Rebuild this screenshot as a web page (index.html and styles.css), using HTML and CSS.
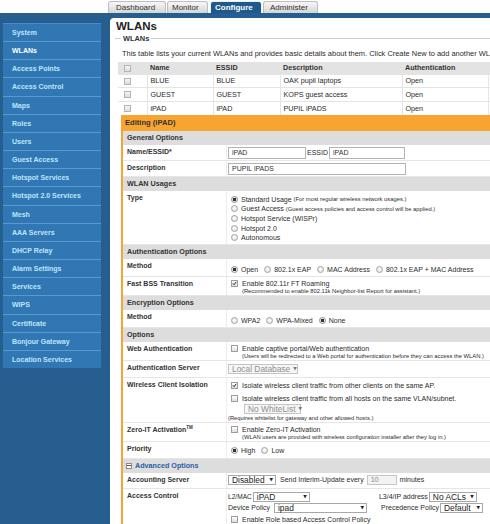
FILE: index.html
```html
<!DOCTYPE html>
<html>
<head>
<meta charset="utf-8">
<title>WLANs</title>
<link rel="stylesheet" href="styles.css">
</head>
<body>
<div class="page">
  <header class="topbar">
    <nav class="tabs">
      <span class="tab t-dash">Dashboard</span>
      <span class="tab t-mon">Monitor</span>
      <span class="tab t-conf active">Configure</span>
      <span class="tab t-adm">Administer</span>
    </nav>
  </header>
  <div class="shell">
    <aside class="sidebar">
      <ul class="menu">
        <li>System</li>
        <li class="current">WLANs</li>
        <li>Access Points</li>
        <li>Access Control</li>
        <li>Maps</li>
        <li>Roles</li>
        <li>Users</li>
        <li>Guest Access</li>
        <li>Hotspot Services</li>
        <li>Hotspot 2.0 Services</li>
        <li>Mesh</li>
        <li>AAA Servers</li>
        <li>DHCP Relay</li>
        <li>Alarm Settings</li>
        <li>Services</li>
        <li>WIPS</li>
        <li>Certificate</li>
        <li>Bonjour Gateway</li>
        <li>Location Services</li>
      </ul>
    </aside>
    <main class="content">
      <h1 class="title">WLANs</h1>
      <fieldset class="box">
        <legend>WLANs</legend>
        <p class="intro">This table lists your current WLANs and provides basic details about them. Click Create New to add another WLAN to the table.</p>
        <table class="list">
          <colgroup>
            <col class="c-chk"><col class="c-name"><col class="c-essid"><col class="c-desc"><col class="c-auth"><col class="c-enc">
          </colgroup>
          <thead>
            <tr><th><span class="tcb"></span></th><th>Name</th><th>ESSID</th><th>Description</th><th>Authentication</th><th>Encryption</th></tr>
          </thead>
          <tbody>
            <tr><td><span class="tcb"></span></td><td>BLUE</td><td>BLUE</td><td>OAK pupil laptops</td><td>Open</td><td>None</td></tr>
            <tr><td><span class="tcb"></span></td><td>GUEST</td><td>GUEST</td><td>KOPS guest access</td><td>Open</td><td>None</td></tr>
            <tr><td><span class="tcb"></span></td><td>iPAD</td><td>iPAD</td><td>PUPIL iPADS</td><td>Open</td><td>None</td></tr>
          </tbody>
        </table>

        <div class="editor">
          <div class="ed-title">Editing (iPAD)</div>

          <div class="sec">General Options</div>
          <div class="row">
            <div class="lbl">Name/ESSID*</div>
            <div class="val v-input"><div class="ln-box"><input class="txt w-name" value="iPAD"><span class="essid">ESSID</span><input class="txt w-essid" value="iPAD"></div></div>
          </div>
          <div class="row">
            <div class="lbl">Description</div>
            <div class="val v-input"><div class="ln-box"><input class="txt w-desc" value="PUPIL iPADS"></div></div>
          </div>

          <div class="sec">WLAN Usages</div>
          <div class="row">
            <div class="lbl">Type</div>
            <div class="val v-type">
              <div class="ln tl"><span class="rd on"></span>Standard Usage<span class="hint">(For most regular wireless network usages.)</span></div>
              <div class="ln tl"><span class="rd"></span>Guest Access<span class="hint">(Guest access policies and access control will be applied.)</span></div>
              <div class="ln tl"><span class="rd"></span>Hotspot Service (WISPr)</div>
              <div class="ln tl"><span class="rd"></span>Hotspot 2.0</div>
              <div class="ln tl"><span class="rd"></span>Autonomous</div>
            </div>
          </div>

          <div class="sec">Authentication Options</div>
          <div class="row">
            <div class="lbl">Method</div>
            <div class="val v-radio"><div class="ln">
              <span class="opt"><span class="rd on"></span>Open</span>
              <span class="opt"><span class="rd"></span>802.1x EAP</span>
              <span class="opt"><span class="rd"></span>MAC Address</span>
              <span class="opt"><span class="rd"></span>802.1x EAP + MAC Address</span>
            </div></div>
          </div>
          <div class="row">
            <div class="lbl">Fast BSS Transition</div>
            <div class="val v-check">
              <div class="ln"><span class="cb on"><svg viewBox="0 0 7 7"><path d="M1.2 3.4 L2.9 5.2 L5.9 1.2" fill="none" stroke="#222" stroke-width="1.4"/></svg></span>Enable 802.11r FT Roaming</div>
              <div class="note ind">(Recommended to enable 802.11k Neighbor-list Report for assistant.)</div>
            </div>
          </div>

          <div class="sec">Encryption Options</div>
          <div class="row">
            <div class="lbl">Method</div>
            <div class="val v-radio"><div class="ln">
              <span class="opt"><span class="rd"></span>WPA2</span>
              <span class="opt"><span class="rd"></span>WPA-Mixed</span>
              <span class="opt"><span class="rd on"></span>None</span>
            </div></div>
          </div>

          <div class="sec">Options</div>
          <div class="row">
            <div class="lbl">Web Authentication</div>
            <div class="val v-check">
              <div class="ln"><span class="cb"></span>Enable captive portal/Web authentication</div>
              <div class="note ind">(Users will be redirected to a Web portal for authentication before they can access the WLAN.)</div>
            </div>
          </div>
          <div class="row">
            <div class="lbl">Authentication Server</div>
            <div class="val v-sel"><div class="ln-box"><span class="sel dis w-ldb">Local Database<span class="arr">&#9660;</span></span></div></div>
          </div>
          <div class="row">
            <div class="lbl">Wireless Client Isolation</div>
            <div class="val v-iso">
              <div class="ln"><span class="cb on"><svg viewBox="0 0 7 7"><path d="M1.2 3.4 L2.9 5.2 L5.9 1.2" fill="none" stroke="#222" stroke-width="1.4"/></svg></span>Isolate wireless client traffic from other clients on the same AP.</div>
              <div class="ln gap4"><span class="cb"></span>Isolate wireless client traffic from all hosts on the same VLAN/subnet.</div>
              <div class="ln-box gap1"><span class="sel dis w-wl">No WhiteList<span class="arr">&#9660;</span></span></div>
              <div class="note gap1">(Requires whitelist for gateway and other allowed hosts.)</div>
            </div>
          </div>
          <div class="row">
            <div class="lbl">Zero-IT Activation<sup class="tm">TM</sup></div>
            <div class="val v-check">
              <div class="ln"><span class="cb"></span>Enable Zero-IT Activation</div>
              <div class="note ind">(WLAN users are provided with wireless configuration installer after they log in.)</div>
            </div>
          </div>
          <div class="row">
            <div class="lbl">Priority</div>
            <div class="val v-prio"><div class="ln">
              <span class="opt"><span class="rd on"></span>High</span>
              <span class="opt"><span class="rd"></span>Low</span>
            </div></div>
          </div>

          <div class="sec adv"><span class="minus"></span>Advanced Options</div>
          <div class="row">
            <div class="lbl">Accounting Server</div>
            <div class="val v-acct"><div class="ln-box">
              <span class="sel w-dis">Disabled<span class="arr">&#9660;</span></span>
              <span class="send">Send Interim-Update every</span>
              <input class="txt small dis w-ten" value="10">
              <span class="mins">minutes</span>
            </div></div>
          </div>
          <div class="row">
            <div class="lbl">Access Control</div>
            <div class="val v-acl">
              <div class="ln-box"><span class="mini">L2/MAC</span><span class="sel w-l2">iPAD<span class="arr">&#9660;</span></span><span class="acl-l3">L3/4/IP address</span><span class="sel w-acl">No ACLs<span class="arr">&#9660;</span></span></div>
              <div class="ln-box gap1"><span class="devp">Device Policy</span><span class="sel w-dev">ipad<span class="arr">&#9660;</span></span><span class="acl-prec">Precedence Policy</span><span class="sel w-def">Default<span class="arr">&#9660;</span></span></div>
              <div class="ln gap3"><span class="cb"></span>Enable Role based Access Control Policy</div>
            </div>
          </div>
        </div>
      </fieldset>
    </main>
  </div>
</div>
</body>
</html>
```

FILE: styles.css
```css
* { box-sizing: border-box; }
html, body { margin: 0; padding: 0; }
body {
  width: 490px;
  height: 524px;
  overflow: hidden;
  background: #fff;
  font-family: "Liberation Sans", Arial, sans-serif;
  font-size: 7px;
  color: #2b2b2b;
}
.page { width: 640px; }

/* ---------- top tabs ---------- */
.topbar {
  height: 13px;
  display: flex;
  align-items: flex-end;
  padding-left: 108px;
  background: #fff;
}
.tabs { display: flex; align-items: flex-end; }
.tab {
  height: 12px;
  line-height: 11px;
  font-size: 8px;
  color: #333;
  background: linear-gradient(#f7f7f7, #d5d5d5);
  border: 1px solid #bdbdbd;
  border-bottom: 0;
  border-radius: 3px 3px 0 0;
  white-space: nowrap;
}
.t-dash { width: 58px; padding-left: 7px; }
.t-mon { width: 41px; padding-left: 4px; margin-left: 1px; }
.t-conf { width: 52px; padding-left: 4px; margin-left: 2px; }
.t-adm { width: 55px; padding-left: 6px; margin-left: 1px; }
.tab.active {
  background: #1f5a8d;
  color: #fff;
  font-weight: bold;
  border-color: #e8eef5;
}

/* ---------- shell ---------- */
.shell {
  display: flex;
  height: 511px;
  background: #265f8f;
}
.sidebar {
  width: 110px;
  flex: none;
  padding: 10px 0 0 3px;
}
.menu {
  list-style: none;
  margin: 0;
  padding: 0;
  width: 98px;
  background: #3177b4;
}
.menu li {
  height: 18.17px;
  line-height: 17px;
  border-top: 1px solid #5a99cf;
  padding-left: 9px;
  font-size: 7px;
  font-weight: bold;
  color: #bfe6fd;
  white-space: nowrap;
}
.menu li:first-child { border-top-color: #4c8cc4; }
.menu li.current { color: #fff; }

.content {
  flex: 1;
  margin-top: 5px;
  background: #fff;
  border-top-left-radius: 4px;
  padding-left: 5px;
}
.title {
  margin: 0 0 0 1px;
  padding-top: 1px;
  font-size: 11.5px;
  line-height: 14px;
  font-weight: bold;
  color: #222;
}

.box {
  margin: 1px 0 0 0;
  padding: 0;
  border: 0;
  border-top: 1px solid #cfcfcf;
  min-width: 0;
}
.box legend {
  margin-left: 6px;
  padding: 0 2px;
  font-size: 7.4px;
  line-height: 9px;
  font-weight: bold;
  color: #333;
}
.intro {
  margin: 5.5px 0 0 7px;
  font-size: 7.45px;
  line-height: 9px;
  white-space: nowrap;
}

/* ---------- WLAN list ---------- */
.list {
  margin: 4px 0 0 3px;
  border-collapse: collapse;
  table-layout: fixed;
  width: 448px;
  font-size: 7.2px;
}
.c-chk { width: 29px; }
.c-name { width: 66px; }
.c-essid { width: 67px; }
.c-desc { width: 122px; }
.c-auth { width: 86px; }
.c-enc { width: 78px; }
.list th {
  height: 12.5px;
  padding: 0 0 0 3px;
  background: #e3e3e3;
  text-align: left;
  font-weight: bold;
  color: #333;
}
.list td {
  height: 13.5px;
  padding: 0 0 0 3px;
  border-top: 1px solid #e4e4e4;
  border-left: 1px solid #e4e4e4;
  white-space: nowrap;
}
.list td:first-child, .list th:first-child { border-left: 0; padding-left: 6px; }
.tcb {
  display: inline-block;
  width: 7px;
  height: 7px;
  vertical-align: middle;
  border: 1px solid #b4b4b4;
  background: linear-gradient(#f6f6f6, #dcdcdc);
}

/* ---------- editor ---------- */
.editor {
  margin-left: 6px;
  border-left: 2px solid #f6a535;
  width: 515px;
}
.ed-title {
  height: 16px;
  line-height: 16px;
  padding-left: 2px;
  background: #f7a530;
  font-size: 7.6px;
  font-weight: bold;
  color: #333;
}
.sec {
  height: 14px;
  line-height: 14px;
  padding-left: 4px;
  background: #dddddd;
  font-size: 7.2px;
  font-weight: bold;
  color: #333;
  display: flex;
  align-items: center;
}
.sec.adv { color: #2a5fa6; padding-left: 3px; }
.minus {
  width: 6px;
  height: 6px;
  margin-right: 3px;
  border: 1px solid #8a8a8a;
  background: linear-gradient(#555, #555) center / 4px 1px no-repeat, #fff;
}
.row {
  display: grid;
  grid-template-columns: 103px 1fr;
  border-bottom: 1px solid #e6e6e6;
}
.lbl {
  padding: 2.5px 0 0 4px;
  line-height: 9px;
  font-size: 7px;
  font-weight: bold;
  color: #333;
  white-space: nowrap;
}
.tm { font-size: 4.5px; vertical-align: 3px; line-height: 0; }
.val {
  padding-left: 1px;
  border-left: 1px solid #ededed;
  display: flex;
  flex-direction: column;
  align-items: flex-start;
  min-width: 0;
}
.ln {
  display: flex;
  align-items: center;
  height: 9px;
  white-space: nowrap;
  font-size: 7px;
}
.ln-box {
  display: flex;
  align-items: center;
  white-space: nowrap;
  font-size: 7px;
}
.tl { height: 9.6px; }
.hint { font-size: 5.8px; margin-left: 2px; }
.note {
  height: 6px;
  line-height: 6px;
  font-size: 5.8px;
  white-space: nowrap;
}
.ind { margin-left: 14px; }
.gap1 { margin-top: 1px; }
.gap3 { margin-top: 2.5px; }
.gap4 { margin-top: 4px; }

.v-input { padding-top: 2px; padding-bottom: 1px; }
.v-type { padding-top: 4px; padding-bottom: 1.5px; }
.v-radio { padding-top: 6px; padding-bottom: 2px; }
.v-check { padding-top: 2px; padding-bottom: 1px; }
.v-sel { padding-top: 3px; padding-bottom: 3px; }
.v-iso { padding-top: 3px; padding-bottom: 1px; }
.v-prio { padding-top: 4.5px; padding-bottom: 2.5px; }
.v-acct { padding-top: 2px; padding-bottom: 3px; }
.v-acl { padding-top: 3px; padding-bottom: 4px; }

/* controls */
.rd {
  flex: none;
  width: 7px;
  height: 7px;
  margin: 0 3px 0 3px;
  border: 1px solid #a3a3a3;
  border-radius: 50%;
  background: radial-gradient(circle at 50% 40%, #ffffff, #dadada);
}
.rd.on {
  background: radial-gradient(circle, #333 0 1.5px, #e8e8e8 2px, #fff);
  border-color: #8f8f8f;
}
.opt { display: flex; align-items: center; margin-right: 3px; }
.cb {
  flex: none;
  display: flex;
  width: 7px;
  height: 7px;
  margin: 0 4px 0 3px;
  border: 1px solid #9d9d9d;
  background: linear-gradient(#ffffff, #dedede);
}
.cb svg { width: 100%; height: 100%; display: block; }

.txt {
  height: 12px;
  margin: 0;
  padding: 0 3px;
  border: 1px solid #b3b3b3;
  background: #fff;
  font-family: "Liberation Sans", Arial, sans-serif;
  font-size: 7px;
  color: #333;
  outline: none;
}
.txt.small { height: 10px; }
.txt.dis { background: #f3f3f3; color: #888; border-color: #c6c6c6; }
.w-name { width: 78px; }
.w-essid { width: 76px; }
.w-desc { width: 178px; }
.w-ten { width: 30px; margin-left: 3px; }
.essid { margin: 0 1px 0 1px; }

.sel {
  flex: none;
  display: inline-flex;
  align-items: center;
  justify-content: space-between;
  height: 10px;
  padding: 0 2px 0 3px;
  border: 1px solid #a8a8a8;
  background: #fff;
  font-size: 8.4px;
  color: #222;
  white-space: nowrap;
}
.sel.dis { color: #8f8f8f; background: #f6f6f6; border-color: #c4c4c4; }
.arr { font-size: 4.5px; font-family: "DejaVu Sans", sans-serif; color: #222; margin-left: 3px; }
.sel.dis .arr { color: #777; }
.w-ldb { width: 70px; }
.w-wl { width: 57px; margin-left: 16px; }
.w-dis { width: 48px; }
.w-l2 { width: 57px; }
.w-acl { width: 48px; margin-left: 1px; }
.w-dev { width: 93px; margin-left: 2px; }
.w-def { width: 43px; margin-left: 1px; }
.send { margin-left: 4px; }
.mins { margin-left: 3px; }
.mini { font-size: 6.6px; margin-right: 1px; }
.acl-l3 { width: 118px; text-align: right; }
.acl-prec { width: 72px; text-align: right; }
.devp { width: 44px; }
```
